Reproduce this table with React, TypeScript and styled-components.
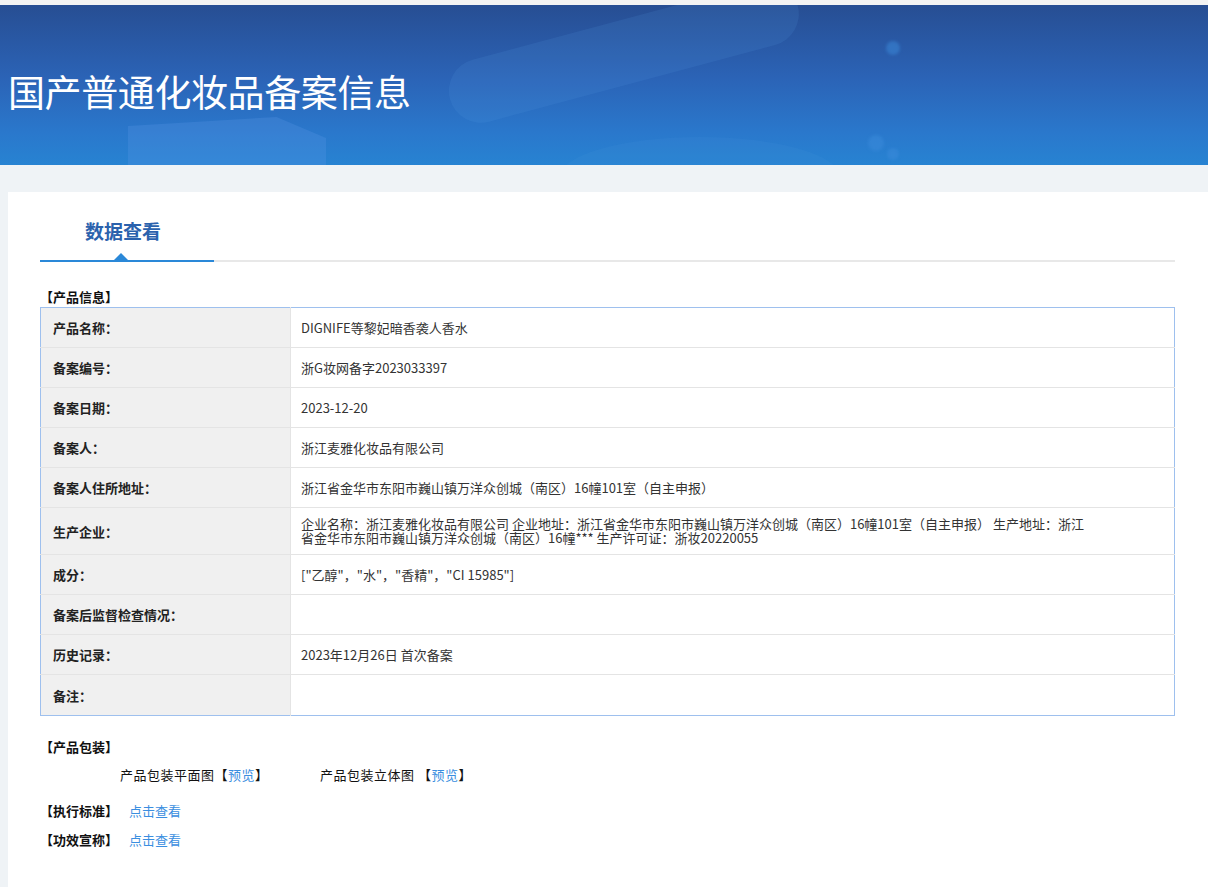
import React from "react";
import styled, { createGlobalStyle } from "styled-components";

const GlobalStyle = createGlobalStyle`
  html, body {
    margin: 0;
    padding: 0;
    background: #eff3f6;
    font-family: "Noto Sans CJK SC", "Noto Sans", "Liberation Sans", sans-serif;
    color: #333;
  }
  * { box-sizing: border-box; }
`;

const Page = styled.div`
  display: flex;
  flex-direction: column;
  min-height: 887px;
`;

const TopStrip = styled.div`
  height: 5px;
  background: #f3f3f3;
`;

const Banner = styled.header`
  position: relative;
  overflow: hidden;
  height: 160px;
  display: flex;
  align-items: center;
  padding: 12px 0 0 8px;
  background: linear-gradient(180deg, #274e93 0%, #2b63b6 45%, #2a78cc 80%, #2783d2 100%);
`;

const Deco = styled.div`
  position: absolute;
  pointer-events: none;
`;

const Pill = styled(Deco)`
  left: 450px;
  top: 62px;
  width: 360px;
  height: 64px;
  border-radius: 32px;
  background: rgba(90, 160, 230, 0.13);
  transform: rotate(-15deg);
  transform-origin: left center;
`;

const Block = styled(Deco)`
  left: 128px;
  top: 112px;
  width: 198px;
  height: 60px;
  background: rgba(90, 150, 230, 0.28);
  clip-path: polygon(0 15%, 75% 0, 100% 35%, 100% 100%, 0 100%);
`;

const Blob = styled(Deco)`
  left: 560px;
  top: 132px;
  width: 280px;
  height: 80px;
  border-radius: 50%;
  background: rgba(70, 150, 220, 0.14);
`;

const Dot = styled(Deco)<{ $x: number; $y: number; $r: number }>`
  left: ${(p) => p.$x - p.$r}px;
  top: ${(p) => p.$y - p.$r}px;
  width: ${(p) => p.$r * 2}px;
  height: ${(p) => p.$r * 2}px;
  border-radius: 50%;
  background: rgba(60, 140, 220, 0.5);
  filter: blur(1.5px);
`;

const Title = styled.h1`
  position: relative;
  margin: 0;
  font-size: 37px;
  font-weight: 400;
  color: #ffffff;
  letter-spacing: -0.4px;
  line-height: 40px;
`;

const Body = styled.main`
  flex: 1;
  padding: 27px 0 0 8px;
`;

const Card = styled.section`
  background: #ffffff;
  min-height: 695px;
  padding: 0 33px 40px 32px;
`;

const TabBar = styled.div`
  display: flex;
  height: 70px;
  border-bottom: 2px solid #e8e8e8;
`;

const Tab = styled.div`
  position: relative;
  width: 174px;
  display: flex;
  align-items: center;
  justify-content: center;
  padding: 8px 8px 0 0;
  margin-bottom: -2px;
  border-bottom: 2px solid #2a88d8;
  font-size: 19px;
  font-weight: 700;
  color: #2b62ad;
  &::after {
    content: "";
    position: absolute;
    left: 74px;
    bottom: 0;
    width: 0;
    height: 0;
    border-left: 7px solid transparent;
    border-right: 7px solid transparent;
    border-bottom: 7px solid #2a88d8;
  }
`;

const SectionTitle = styled.div<{ $mt?: number }>`
  margin-top: ${(p) => p.$mt ?? 0}px;
  font-size: 13px;
  font-weight: 700;
  line-height: 18px;
  color: #111;
`;

const InfoTable = styled.table`
  width: 100%;
  margin-top: 1px;
  border-collapse: collapse;
  border: 1px solid #9ec0ee;
  font-size: 13px;
`;

const Row = styled.tr`
  border-bottom: 1px solid #e4e4e4;
  &:last-child { border-bottom: none; }
`;

const LabelCell = styled.th<{ $tall?: boolean }>`
  width: 250px;
  height: ${(p) => (p.$tall ? 41 : 40)}px;
  padding: 0 0 0 12px;
  text-align: left;
  font-weight: 700;
  color: #222;
  background: #f0f0f0;
  border-right: 1px solid #e4e4e4;
`;

const ValueCell = styled.td`
  height: 40px;
  padding: 9px 10px;
  line-height: 14px;
  color: #333;
  vertical-align: middle;
`;

const ValueText = styled.div`
  max-width: 790px;
  line-height: 14px;
`;

const PackRow = styled.div`
  display: flex;
  padding-left: 80px;
  margin-top: 10px;
  font-size: 13px;
  line-height: 18px;
  color: #111;
`;

const PackItem = styled.span`
  width: 200px;
  letter-spacing: 0.5px;
`;

const Link = styled.a`
  color: #3a8ee0;
  text-decoration: none;
  cursor: pointer;
`;

const LinkRow = styled.div<{ $mt: number }>`
  display: flex;
  align-items: center;
  margin-top: ${(p) => p.$mt}px;
  font-size: 13px;
  line-height: 18px;
`;

const LinkLabel = styled.span`
  font-weight: 700;
  color: #111;
  width: 89px;
`;

const rows: [string, React.ReactNode][] = [
  ["产品名称：", "DIGNIFE等黎妃暗香袭人香水"],
  ["备案编号：", "浙G妆网备字2023033397"],
  ["备案日期：", "2023-12-20"],
  ["备案人：", "浙江麦雅化妆品有限公司"],
  ["备案人住所地址：", "浙江省金华市东阳市巍山镇万洋众创城（南区）16幢101室（自主申报）"],
  [
    "生产企业：",
    "企业名称：浙江麦雅化妆品有限公司 企业地址：浙江省金华市东阳市巍山镇万洋众创城（南区）16幢101室（自主申报） 生产地址：浙江省金华市东阳市巍山镇万洋众创城（南区）16幢*** 生产许可证：浙妆20220055",
  ],
  ["成分：", "[\"乙醇\"，\"水\"，\"香精\"，\"CI 15985\"]"],
  ["备案后监督检查情况：", ""],
  ["历史记录：", "2023年12月26日 首次备案"],
  ["备注：", ""],
];

export default function App() {
  return (
    <Page>
      <GlobalStyle />
      <TopStrip />
      <Banner>
        <Pill />
        <Block />
        <Blob />
        <Dot $x={893} $y={43} $r={7} />
        <Dot $x={876} $y={138} $r={8} />
        <Dot $x={893} $y={149} $r={6} />
        <Title>国产普通化妆品备案信息</Title>
      </Banner>
      <Body>
        <Card>
          <TabBar>
            <Tab>数据查看</Tab>
          </TabBar>
          <SectionTitle $mt={26}>【产品信息】</SectionTitle>
          <InfoTable>
            <tbody>
              {rows.map(([label, value], i) => (
                <Row key={label as string}>
                  <LabelCell $tall={i === rows.length - 1}>{label}</LabelCell>
                  <ValueCell>
                    <ValueText>{value}</ValueText>
                  </ValueCell>
                </Row>
              ))}
            </tbody>
          </InfoTable>
          <SectionTitle $mt={22}>【产品包装】</SectionTitle>
          <PackRow>
            <PackItem>
              产品包装平面图【<Link>预览</Link>】
            </PackItem>
            <PackItem>
              产品包装立体图 【<Link>预览</Link>】
            </PackItem>
          </PackRow>
          <LinkRow $mt={18}>
            <LinkLabel>【执行标准】</LinkLabel>
            <Link>点击查看</Link>
          </LinkRow>
          <LinkRow $mt={11}>
            <LinkLabel>【功效宣称】</LinkLabel>
            <Link>点击查看</Link>
          </LinkRow>
        </Card>
      </Body>
    </Page>
  );
}
